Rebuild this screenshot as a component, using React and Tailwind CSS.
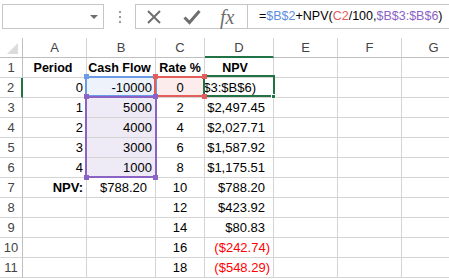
import React from 'react';

const cols = ['A', 'B', 'C', 'D', 'E', 'F', 'G'];
const widths = ['w-[64px]', 'w-[69px]', 'w-[49px]', 'w-[69px]', 'w-[64px]', 'w-[64px]', 'w-[64px]'];

const rows = [
  { a: 'Period', b: 'Cash Flow', c: 'Rate %', d: 'NPV', head: true },
  { a: '0', b: '-10000', c: '0', d: 'formula' },
  { a: '1', b: '5000', c: '2', d: '$2,497.45' },
  { a: '2', b: '4000', c: '4', d: '$2,027.71' },
  { a: '3', b: '3000', c: '6', d: '$1,587.92' },
  { a: '4', b: '1000', c: '8', d: '$1,175.51' },
  { a: 'NPV:', b: '$788.20', c: '10', d: '$788.20', npv: true },
  { a: '', b: '', c: '12', d: '$423.92' },
  { a: '', b: '', c: '14', d: '$80.83' },
  { a: '', b: '', c: '16', d: '($242.74)', neg: true },
  { a: '', b: '', c: '18', d: '($548.29)', neg: true },
];

const Formula = () => (
  <>
    <span>=</span>
    <span className="text-[#5b8de0]">$B$2</span>
    <span>+NPV(</span>
    <span className="text-[#e35d5d]">C2</span>
    <span>/100,</span>
    <span className="text-[#8a63c4]">$B$3:$B$6</span>
    <span>)</span>
  </>
);

const Handle = ({ className }) => (
  <div className={`absolute w-[5px] h-[5px] ${className}`} />
);

const App = () => {
  return (
    <div className="w-[449px] h-[279px] overflow-hidden bg-white text-[13px] text-black" style={{ fontFamily: '"Liberation Sans", Arial, sans-serif' }}>
      {/* formula bar */}
      <div className="flex items-center h-[38px] pb-[8px] pt-[3px]">
        <div className="ml-[2px] w-[102px] h-[25px] border border-[#c6c6c6] flex items-center justify-end pr-[5px]">
          <div className="w-0 h-0 border-l-[4px] border-r-[4px] border-t-[4px] border-l-transparent border-r-transparent border-t-[#6d6d6d]" />
        </div>
        <div className="w-[31px] flex flex-col items-center gap-[3px]">
          <div className="w-[2px] h-[2px] bg-[#9a9a9a]" />
          <div className="w-[2px] h-[2px] bg-[#9a9a9a]" />
          <div className="w-[2px] h-[2px] bg-[#9a9a9a]" />
        </div>
        <div className="flex-1 h-[25px] border border-r-0 border-[#c6c6c6] flex items-center">
          <div className="w-[111px] flex items-center h-full">
            <svg className="ml-[10px]" width="16" height="16" viewBox="0 0 16 16">
              <path d="M2 2 L14 14 M14 2 L2 14" stroke="#6e6e6e" strokeWidth="2" fill="none" />
            </svg>
            <svg className="ml-[21px]" width="18" height="16" viewBox="0 0 18 16">
              <path d="M1.5 8.5 L6.5 13.5 L16.5 2" stroke="#6e6e6e" strokeWidth="3" fill="none" />
            </svg>
            <span className="ml-[19px] italic text-[20px] text-[#6e6e6e] leading-none" style={{ fontFamily: '"Liberation Serif", serif' }}>fx</span>
          </div>
          <div className="h-full border-l border-[#c6c6c6] pl-[11px] flex items-center whitespace-nowrap text-[12.5px]">
            <Formula />
          </div>
        </div>
      </div>

      {/* grid */}
      <div className="relative">
        {/* header row */}
        <div className="flex h-[20px]">
          <div className="w-[23px] shrink-0 h-full border-r border-b border-[#bfbfbf] flex items-end justify-end pr-[4px] pb-[3px]">
            <svg width="11" height="11" viewBox="0 0 11 11">
              <polygon points="11,0 11,11 0,11" fill="#dcdcdc" />
            </svg>
          </div>
          {cols.map((c, i) => (
            <div
              key={c}
              className={`${widths[i]} shrink-0 h-full border-r flex items-center justify-center pt-[1px] text-[#444] ${c === 'D' ? 'border-b-2 border-b-[#217346] border-r-[#d4d4d4]' : 'border-b border-[#bfbfbf] border-r-[#d4d4d4]'}`}
            >
              {c}
            </div>
          ))}
        </div>

        {rows.map((r, idx) => {
          const n = idx + 1;
          const bBg = n === 2 ? 'bg-[#edf2fb]' : n >= 3 && n <= 6 ? 'bg-[#efebf6]' : '';
          const cBg = n === 2 ? 'bg-[#fcecec]' : '';
          const bold = r.head ? 'font-bold text-[12.5px]' : '';
          return (
            <div key={n} className="flex h-[20px]">
              <div className={`w-[23px] shrink-0 h-full border-b border-[#d4d4d4] flex items-center justify-center pt-[1px] text-[#444] ${n === 2 ? 'border-r-2 border-r-[#217346]' : 'border-r border-r-[#bfbfbf]'}`}>
                {n}
              </div>
              <div className={`w-[64px] shrink-0 h-full border-r border-b border-[#d4d4d4] flex items-center pt-[1px] pr-[3px] ${r.head ? 'justify-center' : 'justify-end'} ${r.npv ? 'font-bold' : ''} ${bold}`}>
                {r.a}
              </div>
              <div className={`w-[69px] shrink-0 h-full border-r border-b border-[#d4d4d4] flex items-center pt-[1px] whitespace-nowrap ${bBg} ${r.head ? 'justify-center pr-0' : 'justify-end'} ${r.npv ? 'pr-[8px]' : 'pr-[3px]'} ${bold}`}>
                {r.b}
              </div>
              <div className={`w-[49px] shrink-0 h-full border-r border-b border-[#d4d4d4] flex items-center justify-center pt-[1px] whitespace-nowrap ${cBg} ${bold}`}>
                {r.c}
              </div>
              <div className={`w-[69px] shrink-0 h-full border-r border-b border-[#d4d4d4] flex items-center pt-[1px] overflow-hidden whitespace-nowrap ${r.head ? 'justify-center' : 'justify-end'} ${r.neg ? 'text-[#ff0000] pr-[3px]' : 'pr-[8px]'} ${r.d === 'formula' ? '!pr-[17px]' : ''} ${bold}`}>
                {r.d === 'formula' ? '=$B$2+NPV(C2/100,$B$3:$B$6)' : r.d}
              </div>
              <div className="w-[64px] shrink-0 h-full border-r border-b border-[#d4d4d4]" />
              <div className="w-[64px] shrink-0 h-full border-r border-b border-[#d4d4d4]" />
              <div className="w-[64px] shrink-0 h-full border-r border-b border-[#d4d4d4]" />
            </div>
          );
        })}

        {/* reference highlights */}
        <div className="absolute left-[85px] top-[38px] w-[72px] h-[21px] border-2 border-[#6b9be4]" />
        <div className="absolute left-[85px] top-[58px] w-[72px] h-[82px] border-2 border-[#8a63c4]" />
        <div className="absolute left-[154px] top-[38px] w-[51px] h-[21px] border-2 border-[#e35d5d]" />
        <div className="absolute left-[203px] top-[37px] w-[72px] h-[22px] border-2 border-[#217346]" />

        <Handle className="left-[84px] top-[36px] bg-[#6b9be4]" />
        <Handle className="left-[153px] top-[36px] bg-[#e35d5d]" />
        <Handle className="left-[202px] top-[36px] bg-[#e35d5d]" />
        <Handle className="left-[202px] top-[56px] bg-[#e35d5d]" />
        <Handle className="left-[153px] top-[56px] bg-[#8a63c4]" />
        <Handle className="left-[84px] top-[56px] bg-[#8a63c4]" />
        <Handle className="left-[84px] top-[137px] bg-[#8a63c4]" />
        <Handle className="left-[153px] top-[137px] bg-[#8a63c4]" />
        <div className="absolute left-[271px] top-[56px] w-[5px] h-[5px] bg-[#217346] border border-white" />
      </div>
    </div>
  );
};

export default App;
